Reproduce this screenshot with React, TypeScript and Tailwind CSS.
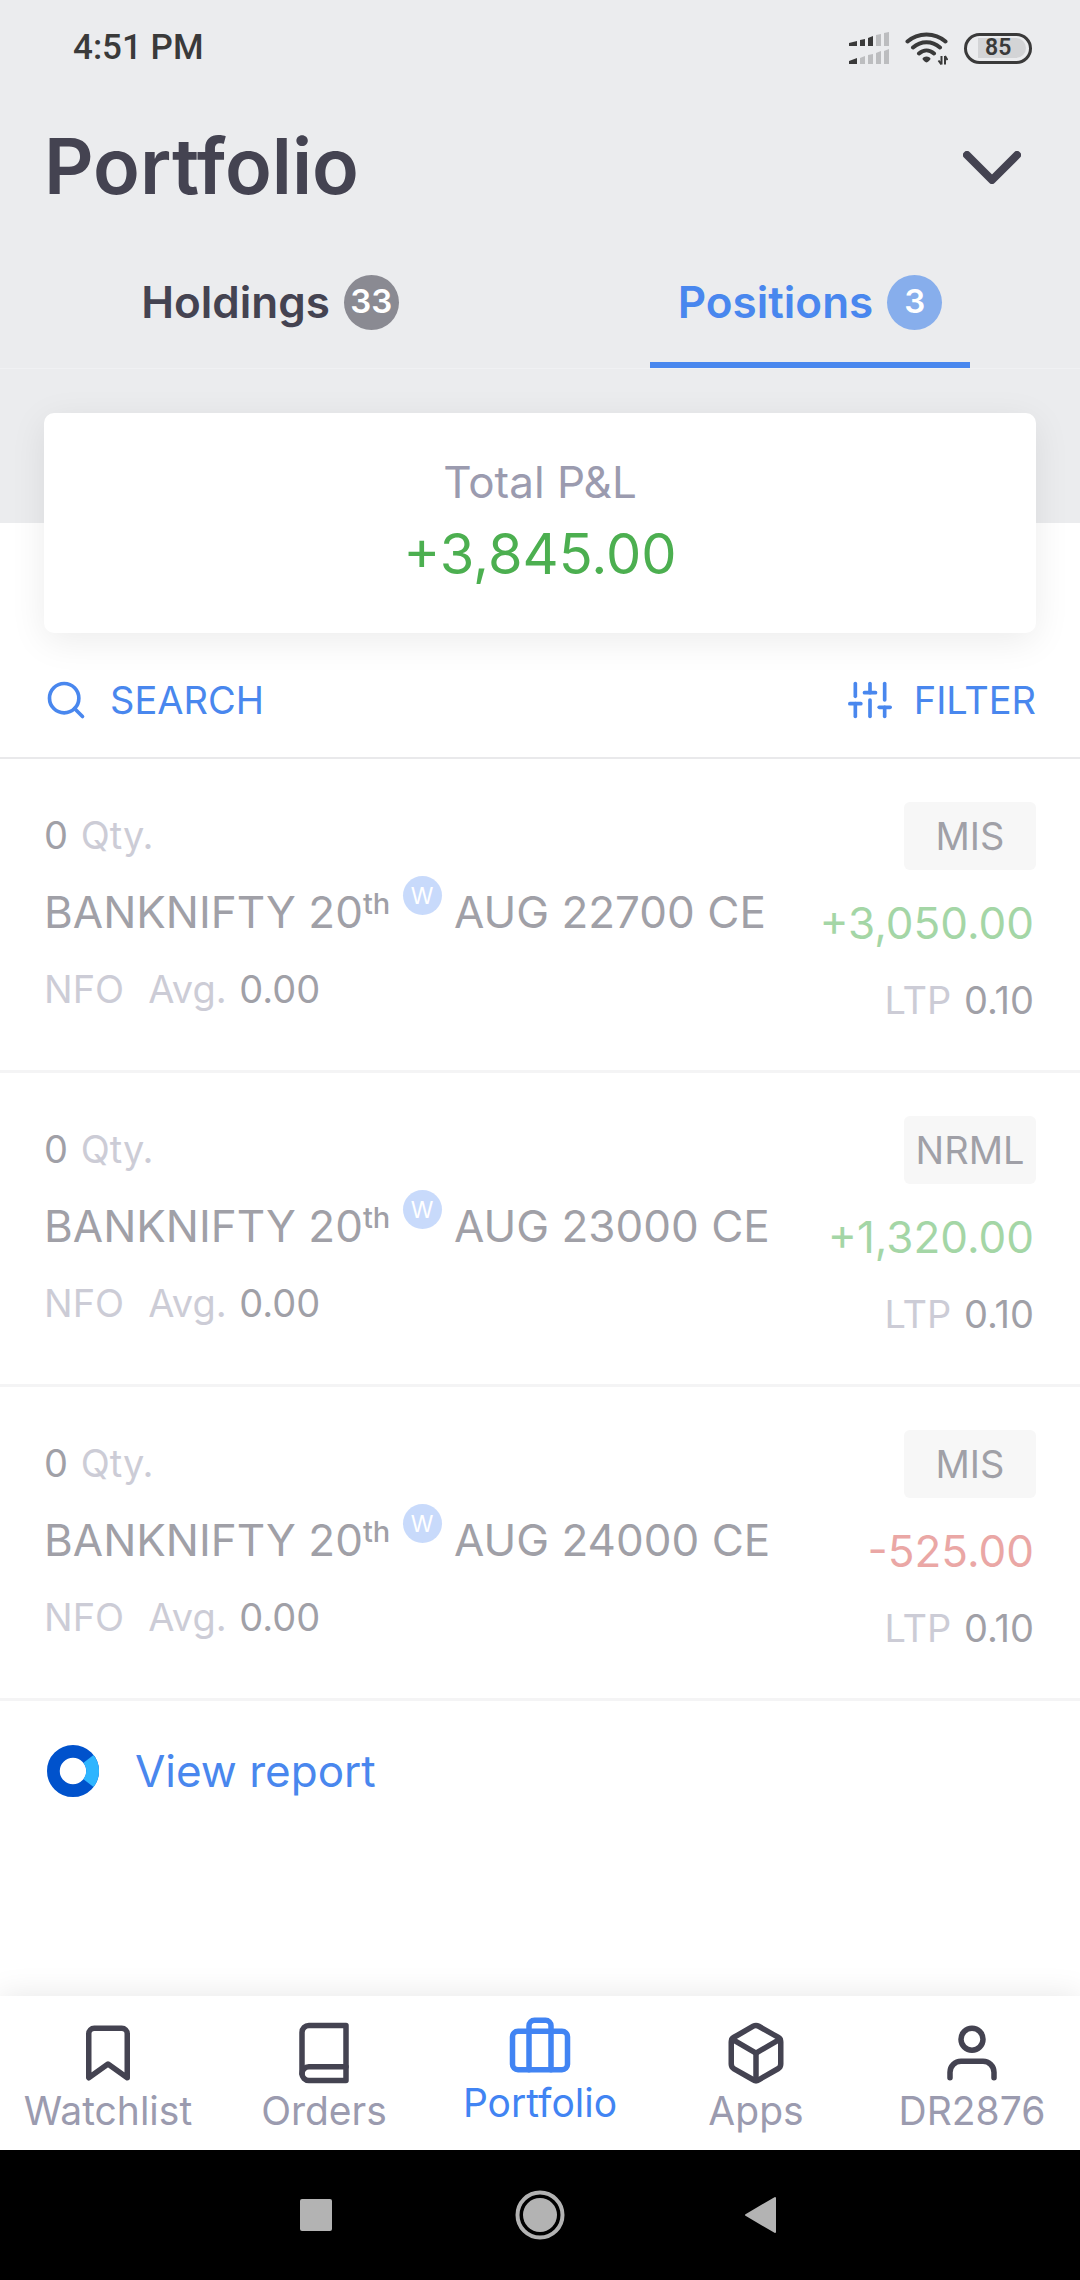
import type { IconType } from 'react-icons';
import { FiBook, FiBookmark, FiBox, FiBriefcase, FiSearch, FiSliders, FiUser } from 'react-icons/fi';

type Position = {
  strike: string;
  product: string;
  pnl: string;
};

const positions: Position[] = [
  { strike: '22700', product: 'MIS', pnl: '+3,050.00' },
  { strike: '23000', product: 'NRML', pnl: '+1,320.00' },
  { strike: '24000', product: 'MIS', pnl: '-525.00' },
];

const navItems: { label: string; icon: IconType; active?: boolean }[] = [
  { label: 'Watchlist', icon: FiBookmark },
  { label: 'Orders', icon: FiBook },
  { label: 'Portfolio', icon: FiBriefcase, active: true },
  { label: 'Apps', icon: FiBox },
  { label: 'DR2876', icon: FiUser },
];

const StatusBar = () => (
  <div className="flex h-24 items-center justify-between pl-[73px] pr-12 font-[Roboto,sans-serif] text-[#3a3a3a]">
    <span className="text-[35px] font-medium">4:51 PM</span>
    <div className="flex items-center gap-4">
      <svg width="40" height="32" viewBox="0 0 40 32" fill="#3a3a3a">
        <path d="M0 11l8-2v5H0zM11 8l5-1v7h-5zM19 6l5-2v10h-5zM0 29l8-3v6H0z" />
        <path d="M27 3l5-1v12h-5zM35 1l5-1v14h-5zM11 26l5-2v8h-5zM19 23l5-1v10h-5zM27 21l5-2v13h-5zM35 19l5-2v15h-5z" fill="#bcbdbf" />
      </svg>
      <svg width="43" height="33" viewBox="0 0 43 33" fill="none" stroke="#3a3a3a" strokeWidth="4" strokeLinecap="round">
        <path d="M2.500 9.500C13 0 30 0 40.500 9.500M8 15.500C16 8.500 27 8.500 35 15.500M14 21.500C18.500 17.500 24.500 17.500 29 21.500" />
        <path d="M21.500 24.500c2 0 4 1.200 4 2.300 0 1-2.800 3.700-4 3.700s-4-2.700-4-3.700c0-1.100 2-2.300 4-2.300z" fill="#3a3a3a" stroke="none" />
        <path d="M36.500 24v8.500M36.500 32.500L33.500 28.500M40 32.500V24M40 24l2.500 4" strokeWidth="2" strokeLinecap="butt" />
      </svg>
      <div className="flex h-[31px] w-[68px] items-center rounded-full border-3 border-[#3a3a3a] pl-[11px]">
        <span className="flex h-5 w-12 items-center rounded-r-full bg-[#d3d4d6] pl-[7px] text-[23px] font-semibold">85</span>
      </div>
    </div>
  </div>
);

const Header = () => (
  <header className="bg-[#ebecee] pb-[154px]">
    <StatusBar />
    <div className="flex h-[142px] items-center justify-between pl-11 pr-[59px]">
      <h1 className="text-[77px] font-semibold text-[#444351]">Portfolio</h1>
      <button type="button" aria-label="Expand">
        <svg width="58" height="33" viewBox="0 0 58 33" fill="none" stroke="#444351" strokeWidth="8" strokeLinecap="round" strokeLinejoin="round">
          <path d="M4 4l25 25L54 4" />
        </svg>
      </button>
    </div>
    <div className="grid grid-cols-2 justify-items-center border-b border-[#f0f1f3] pt-6 text-[44px] font-semibold">
      <button type="button" className="flex h-[106px] items-start px-7 text-[#444351]">
        <span className="flex h-20 items-center gap-[14px]">
          Holdings
          <span className="flex size-[55px] items-center justify-center rounded-full bg-[#8a8a92] text-[33px] text-white">33</span>
        </span>
      </button>
      <button type="button" className="flex h-[106px] items-start border-b-6 border-[#4987ee] px-7 text-[#4987ee]">
        <span className="flex h-20 items-center gap-[14px]">
          Positions
          <span className="flex size-[55px] items-center justify-center rounded-full bg-[#87aeec] text-[33px] text-white">3</span>
        </span>
      </button>
    </div>
  </header>
);

const PositionRow = ({ strike, product, pnl }: Position) => (
  <li className="border-b-3 border-[#f4f4f5]">
    <div className="flex justify-between px-11 pb-[46px] pt-[43px] text-[38px] leading-[48px] text-[#444351] opacity-50">
      <div className="flex flex-col gap-[29px] pt-[9px]">
        <p>
          <span className="mr-[2px]">0</span> <span className="text-[#9b9baf]">Qty.</span>
        </p>
        <p className="h-12 whitespace-nowrap text-[44px]">
          BANKNIFTY 20<sup className="text-[29px] font-medium">th</sup>{' '}
          <span className="relative -top-5 inline-flex size-[39px] items-center justify-center rounded-full bg-[#93b7f9] align-middle text-[23px] text-white">W</span>{' '}
          AUG {strike} CE
        </p>
        <p>
          <span className="mr-6 text-[#9b9baf]">NFO</span>
          <span className="mr-[2px] text-[#9b9baf]">Avg.</span> 0.00
        </p>
      </div>
      <div className="flex flex-col items-end gap-[29px]">
        <span className="flex h-[68px] w-[132px] items-center justify-center rounded-md bg-[#f0f0f0]">{product}</span>
        <span className={pnl.startsWith('-') ? 'pr-[2px] text-[44px] text-[#d6514e]' : 'pr-[2px] text-[44px] text-[#4caf50]'}>{pnl}</span>
        <p className="pr-[2px]">
          <span className="mr-[2px] text-[#9b9baf]">LTP</span> 0.10
        </p>
      </div>
    </div>
  </li>
);

const BottomNav = () => (
  <nav className="grid h-[154px] grid-cols-5 bg-white shadow-[0_0_30px_rgba(0,0,0,0.1)]">
    {navItems.map(({ label, icon: Icon, active }) => (
      <a
        key={label}
        href="#"
        className={active ? 'flex flex-col items-center pt-4 text-[#4184f3]' : 'flex flex-col items-center pt-6 text-[#444351]'}
      >
        <Icon size={66} />
        <span className={active ? 'text-[39px] leading-[50px]' : 'text-[39px] leading-[50px] text-[#9b9baf]'}>{label}</span>
      </a>
    ))}
  </nav>
);

const SystemNav = () => (
  <div className="flex h-[130px] items-center justify-center bg-black">
    <button type="button" aria-label="Recent apps" className="flex w-56 justify-center">
      <span className="size-8 rounded-xs bg-[#b3b3b3]" />
    </button>
    <button type="button" aria-label="Home" className="flex w-56 justify-center">
      <svg width="50" height="50" viewBox="0 0 50 50">
        <circle cx="25" cy="25" r="22.500" fill="none" stroke="#b3b3b3" strokeWidth="4" />
        <circle cx="25" cy="25" r="17" fill="#b3b3b3" />
      </svg>
    </button>
    <button type="button" aria-label="Back" className="flex w-56 justify-center">
      <svg width="38" height="38" viewBox="0 0 38 38" fill="#b3b3b3" stroke="#b3b3b3" strokeWidth="2" strokeLinejoin="round">
        <path d="M1 19L30 2v34z" />
      </svg>
    </button>
  </div>
);

const App = () => {
  return (
    <div className="flex min-h-screen flex-col bg-white font-[Inter,sans-serif]">
      <Header />
      <main className="flex-1">
        <section className="relative mx-11 -mt-[110px] flex flex-col items-center gap-2 rounded-[10px] bg-white pb-[43px] pt-[41px] shadow-[0_8px_36px_rgba(0,0,0,0.08)]">
          <h2 className="text-[44px] leading-[56px] text-[#9b9baf]">Total P&amp;L</h2>
          <p className="text-[56px] leading-[72px] text-[#4caf50]">+3,845.00</p>
        </section>

        <div className="flex items-center justify-between border-b-2 border-[#e9e9eb] px-11 pb-[31px] pt-[41px] text-[38px] leading-[52px] text-[#4987ee]">
          <button type="button" className="flex items-center gap-[22px]">
            <FiSearch size={44} />
            SEARCH
          </button>
          <button type="button" className="flex items-center gap-[22px]">
            <FiSliders size={44} />
            FILTER
          </button>
        </div>

        <ul>
          {positions.map((position) => (
            <PositionRow key={position.strike} {...position} />
          ))}
        </ul>

        <a href="#" className="flex items-center gap-9 px-[47px] pt-[43px] text-[44px] leading-[54px] text-[#4987ee]">
          <svg width="52" height="52" viewBox="0 0 53 53" fill="none" strokeWidth="13">
            <circle cx="26.500" cy="26.500" r="20" stroke="#0052cc" />
            <path d="M42.300 14.200A20 20 0 0 1 42.300 38.800" stroke="#2eb5ff" />
          </svg>
          View report
        </a>
      </main>
      <BottomNav />
      <SystemNav />
    </div>
  );
};

export default App;
